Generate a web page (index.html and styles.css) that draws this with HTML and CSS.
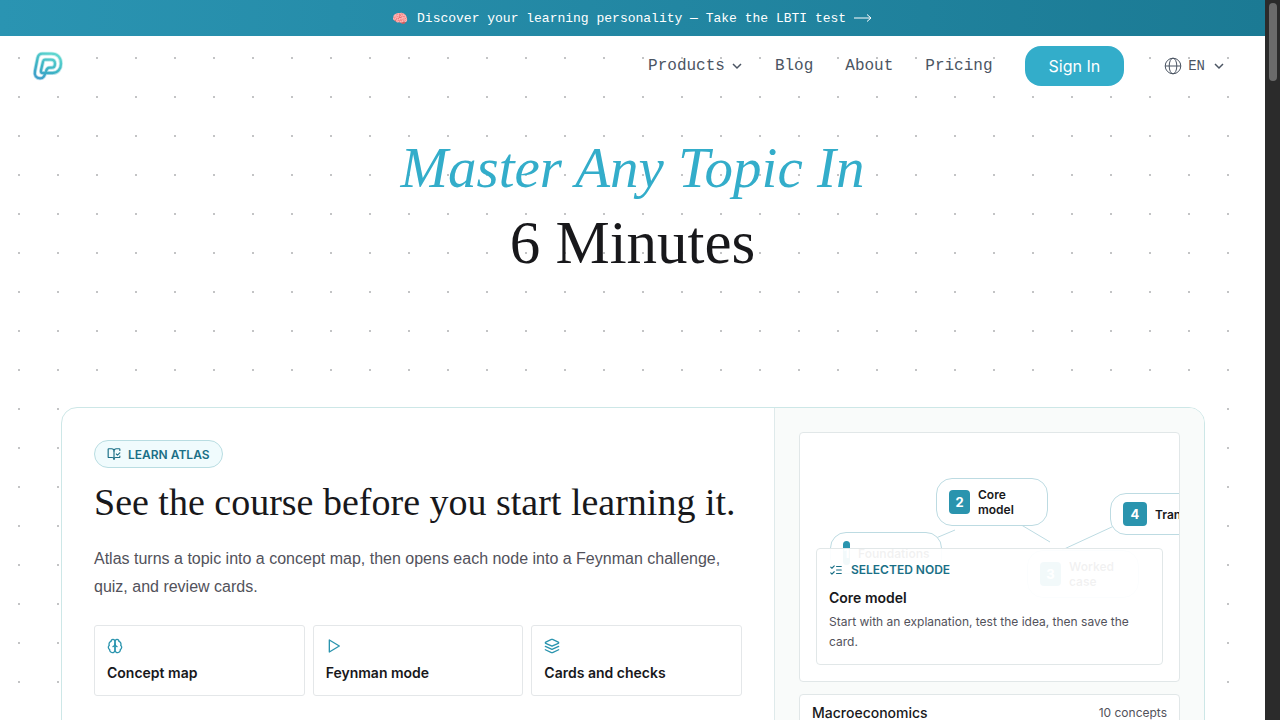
FILE: index.html
```html
<!DOCTYPE html>
<html lang="en">
<head>
  <meta charset="UTF-8">
  <meta name="viewport" content="width=device-width, initial-scale=1.0">
  <title>Master Any Topic In 6 Minutes</title>
  <link rel="stylesheet" href="styles.css">
</head>
<body>
  <div class="page">
    <a class="banner" href="#lbti">
      <span>🧠</span>
      <span>Discover your learning personality — Take the LBTI test</span>
      <svg width="18" height="10" viewBox="0 0 18 10"><path d="M0 5h17M13 1.5L17 5l-4 3.500"/></svg>
    </a>

    <header class="header">
      <a class="logo" href="#home" aria-label="Home">
        <svg width="32" height="32" viewBox="0 0 96 96">
          <defs>
            <linearGradient id="logoFill" x1="0.7" y1="0" x2="0.2" y2="1">
              <stop offset="0" stop-color="#5ed6cf"/>
              <stop offset="0.55" stop-color="#3cb4c4"/>
              <stop offset="1" stop-color="#3f9fca"/>
            </linearGradient>
          </defs>
          <path class="logo-glow" d="M46 69H62C77 69 87 57 87 41C87 22 76 11 58 11H31C23 11 19 15 17 23L9 63C6 77 13 85 24 85C36 85 38 76 42 64C44 56 47 53 53 53H58C65 53 69 48 69 41C69 33 65 29 57 29H39C35 29 34 31 33 35L27 61C26 67 28 69 33 69H46"/>
          <path d="M46 69H62C77 69 87 57 87 41C87 22 76 11 58 11H31C23 11 19 15 17 23L9 63C6 77 13 85 24 85C36 85 38 76 42 64C44 56 47 53 53 53H58C65 53 69 48 69 41C69 33 65 29 57 29H39C35 29 34 31 33 35L27 61C26 67 28 69 33 69H46"/>
        </svg>
      </a>
      <nav class="nav">
        <button class="nav-link" type="button">Products
          <svg class="chevron" width="12" height="12" viewBox="0 0 12 12"><path d="M2 4l4 4 4-4"/></svg>
        </button>
        <a class="nav-link" href="#blog">Blog</a>
        <a class="nav-link" href="#about">About</a>
        <a class="nav-link" href="#pricing">Pricing</a>
        <button class="sign-in" type="button">Sign In</button>
        <button class="lang" type="button">
          <svg width="18" height="18" viewBox="0 0 18 18"><circle cx="9" cy="9" r="7.800"/><ellipse cx="9" cy="9" rx="3.800" ry="7.800"/><path d="M1 9h16"/></svg>
          <span>EN</span>
          <svg class="chevron" width="12" height="12" viewBox="0 0 12 12"><path d="M2 4l4 4 4-4"/></svg>
        </button>
      </nav>
    </header>

    <main>
      <h1 class="hero"><em>Master Any Topic In</em><span>6 Minutes</span></h1>

      <section class="atlas">
        <div class="intro">
          <div class="pill">
            <svg class="icon" width="14" height="14" viewBox="0 0 24 24"><path d="M12 21V7"/><path d="m16 12 2 2 4-4"/><path d="M22 6V4a1 1 0 0 0-1-1h-5a4 4 0 0 0-4 4 4 4 0 0 0-4-4H3a1 1 0 0 0-1 1v13a1 1 0 0 0 1 1h6a3 3 0 0 1 3 3 3 3 0 0 1 3-3h6a1 1 0 0 0 1-1v-1.300"/></svg>
            LEARN ATLAS
          </div>
          <h2>See the course before you start learning it.</h2>
          <p>Atlas turns a topic into a concept map, then opens each node into a Feynman challenge, quiz, and review cards.</p>
          <div class="features">
            <div class="feature">
              <svg class="icon" width="16" height="16" viewBox="0 0 24 24"><path d="M12 5a3 3 0 1 0-5.997.125 4 4 0 0 0-2.526 5.770 4 4 0 0 0 .556 6.588A4 4 0 1 0 12 18Z"/><path d="M12 5a3 3 0 1 1 5.997.125 4 4 0 0 1 2.526 5.770 4 4 0 0 1-.556 6.588A4 4 0 1 1 12 18Z"/><path d="M15 13a4.500 4.500 0 0 1-3-4 4.500 4.500 0 0 1-3 4"/></svg>
              <h3>Concept map</h3>
            </div>
            <div class="feature">
              <svg class="icon" width="16" height="16" viewBox="0 0 24 24"><path d="M5 3l15 9-15 9z"/></svg>
              <h3>Feynman mode</h3>
            </div>
            <div class="feature">
              <svg class="icon" width="16" height="16" viewBox="0 0 24 24"><path d="m12.830 2.180a2 2 0 0 0-1.660 0L2.600 6.080a1 1 0 0 0 0 1.830l8.580 3.910a2 2 0 0 0 1.660 0l8.580-3.900a1 1 0 0 0 0-1.830Z"/><path d="m22 17.650-9.170 4.160a2 2 0 0 1-1.660 0L2 17.650"/><path d="m22 12.650-9.170 4.160a2 2 0 0 1-1.660 0L2 12.650"/></svg>
              <h3>Cards and checks</h3>
            </div>
          </div>
        </div>

        <div class="preview">
          <div class="map">
            <svg class="edges" width="380" height="248" viewBox="0 0 380 248"><path d="M136 105L155 97M218 90L250 109M262 117L314 93"/></svg>
            <div class="node node-1"><b>1</b><span>Foundations</span></div>
            <div class="node node-2"><b>2</b><span>Core model</span></div>
            <div class="node node-3"><b>3</b><span>Worked case</span></div>
            <div class="node node-4"><b>4</b><span>Transfer</span></div>
            <div class="selected">
              <div class="selected-label">
                <svg class="icon" width="14" height="14" viewBox="0 0 24 24"><path d="m3 17 2 2 4-4"/><path d="m3 7 2 2 4-4"/><path d="M13 6h8"/><path d="M13 12h8"/><path d="M13 18h8"/></svg>
                SELECTED NODE
              </div>
              <h3>Core model</h3>
              <p>Start with an explanation, test the idea, then save the card.</p>
            </div>
          </div>
          <div class="course">
            <h3>Macroeconomics</h3>
            <span>10 concepts</span>
          </div>
        </div>
      </section>
    </main>
  </div>
  <div class="scrollbar"><div class="thumb"></div></div>
</body>
</html>
```
FILE: styles.css
```css
* {
  box-sizing: border-box;
}

body {
  margin: 0;
  height: 100vh;
  display: flex;
  overflow: hidden;
  font-family: Inter, "Liberation Sans", sans-serif;
  color: #18181b;
  background: #fff;
}

h1, h2, h3, p {
  margin: 0;
}

button {
  border: none;
  background: none;
  padding: 0;
  cursor: pointer;
}

a {
  text-decoration: none;
}

svg {
  fill: none;
  stroke: currentColor;
  flex-shrink: 0;
}

.page {
  flex: 1;
  min-width: 0;
  overflow: hidden;
  background-image: radial-gradient(circle at 19px 19px, #33373c 0, transparent 1px);
  background-size: 39px 39px;
}

.scrollbar {
  width: 15px;
  padding: 3px;
  background: #2b2b2b;
}

.thumb {
  height: 78px;
  width: 8px;
  margin: 0 auto;
  border-radius: 4px;
  background: #6b6b6b;
}

.banner {
  display: flex;
  align-items: center;
  justify-content: center;
  gap: 8px;
  height: 36px;
  font-family: "Liberation Mono", monospace;
  font-size: 13px;
  color: #fff;
  background: linear-gradient(90deg, #2a94b2, #1b7a94);
}

.banner span:first-child {
  font-family: "Noto Color Emoji", sans-serif;
}

.header {
  display: flex;
  align-items: center;
  justify-content: space-between;
  height: 60px;
  padding: 0 40px 0 32px;
}

.logo {
  height: 32px;
  background: #fff;
}

.logo path {
  stroke: url(#logoFill);
  stroke-width: 7;
  stroke-linejoin: round;
}

.logo .logo-glow {
  stroke-width: 12;
  opacity: 0.35;
}

.nav {
  display: flex;
  align-items: center;
  gap: 32px;
}

.nav-link, .lang {
  display: flex;
  align-items: center;
  gap: 6px;
  font-family: "Liberation Mono", monospace;
  font-size: 16px;
  color: #4b5563;
}

.chevron {
  stroke-width: 1.5;
}

.sign-in {
  height: 40px;
  padding: 0 24px;
  border-radius: 16px;
  font-family: inherit;
  font-size: 16px;
  color: #fff;
  background: #33adca;
}

.lang {
  margin-left: 8px;
  font-size: 14px;
}

.lang .chevron {
  margin-left: 2px;
}

.hero {
  padding-top: 34px;
  font-family: "Liberation Serif", serif;
  font-size: 61px;
  line-height: 75px;
  font-weight: 400;
  text-align: center;
}

.hero em, .hero span {
  display: block;
}

.hero em {
  font-size: 57px;
  color: #33adca;
}

.atlas {
  display: grid;
  grid-template-columns: minmax(0, 1fr) 430px;
  margin: 127px 60px 0 61px;
  border: 1px solid #cde7e7;
  border-radius: 16px;
  overflow: hidden;
  background: #fff;
}

.intro {
  padding: 32px;
}

.icon {
  stroke-width: 2;
  stroke-linecap: round;
  stroke-linejoin: round;
}

.pill {
  display: inline-flex;
  align-items: center;
  gap: 7px;
  height: 28px;
  padding: 0 12px;
  border: 1px solid #b9dde2;
  border-radius: 14px;
  font-size: 12px;
  font-weight: 600;
  color: #1a6f86;
  background: #f0fbfd;
}

.intro h2 {
  margin-top: 12px;
  font-family: "Liberation Serif", serif;
  font-size: 38px;
  line-height: 45px;
  font-weight: 400;
}

.intro p {
  margin-top: 20px;
  font-family: "Liberation Sans", sans-serif;
  font-size: 16px;
  line-height: 28px;
  color: #52525b;
}

.features {
  display: grid;
  grid-template-columns: repeat(3, 1fr);
  gap: 8px;
  margin-top: 24px;
}

.feature {
  padding: 12px;
  border: 1px solid #e4e7e9;
  border-radius: 3px;
  background: #fff;
}

.feature .icon {
  display: block;
  color: #2a94ae;
}

.feature h3, .selected h3, .course h3 {
  font-size: 14px;
  line-height: 20px;
  font-weight: 600;
}

.feature h3 {
  margin-top: 8px;
  line-height: 21px;
}

.preview {
  padding: 24px;
  border-left: 1px solid #dfeaeb;
  background: #f9fbfa;
}

.map {
  position: relative;
  height: 250px;
  border: 1px solid #e1e7e8;
  border-radius: 4px;
  overflow: hidden;
  background: #fff;
}

.edges {
  position: absolute;
  inset: 0;
  stroke: #bddbe2;
}

.node {
  position: absolute;
  display: flex;
  align-items: center;
  gap: 8px;
  width: 112px;
  height: 42px;
  padding: 0 12px;
  border: 1px solid #bddbe2;
  border-radius: 16px;
  font-size: 12px;
  line-height: 15px;
  font-weight: 600;
  background: #fff;
}

.node b {
  flex: 0 1 24px;
  min-width: 7px;
  height: 24px;
  border-radius: 4px;
  font-size: 13px;
  font-weight: 700;
  line-height: 24px;
  text-align: center;
  color: #fff;
  background: #2a94ae;
}

.node-1 { left: 30px; top: 99px; }
.node-2 { left: 136px; top: 45px; }
.node-3 { left: 227px; top: 117px; }
.node-4 { left: 310px; top: 60px; }

.node-2, .node-3 {
  height: 48px;
}

.node-2 b, .node-3 b {
  flex: 0 0 21px;
}

.node-4 b {
  flex: 0 0 24px;
}

.selected {
  position: absolute;
  left: 16px;
  right: 16px;
  bottom: 16px;
  padding: 12px;
  border: 1px solid #e1e7e8;
  border-radius: 4px;
  background: rgba(255, 255, 255, 0.94);
}

.selected-label {
  display: flex;
  align-items: center;
  gap: 8px;
  font-size: 12px;
  line-height: 18px;
  font-weight: 600;
  color: #1a6f86;
}

.selected h3 {
  margin-top: 9px;
}

.selected p {
  margin-top: 4px;
  font-size: 12px;
  line-height: 20px;
  color: #52525b;
}

.course {
  display: flex;
  justify-content: space-between;
  margin-top: 12px;
  padding: 8px 12px;
  border: 1px solid #e1e7e8;
  border-radius: 4px;
  background: #fff;
}

.course h3 {
  font-weight: 500;
}

.course span {
  font-size: 12px;
  line-height: 20px;
  color: #52525b;
}
```
